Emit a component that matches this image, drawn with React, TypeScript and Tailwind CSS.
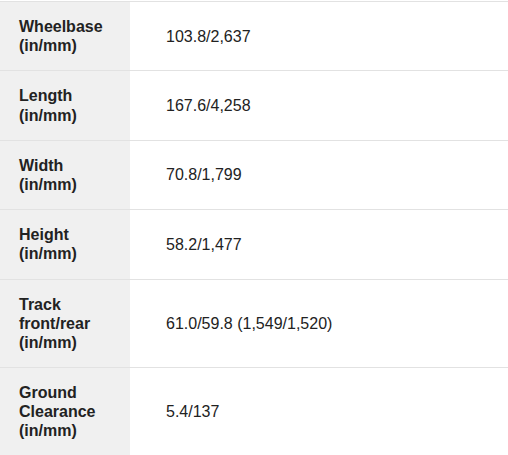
import React from "react";

const rows: [string[], string][] = [
  [["Wheelbase", "(in/mm)"], "103.8/2,637"],
  [["Length", "(in/mm)"], "167.6/4,258"],
  [["Width", "(in/mm)"], "70.8/1,799"],
  [["Height", "(in/mm)"], "58.2/1,477"],
  [["Track", "front/rear", "(in/mm)"], "61.0/59.8 (1,549/1,520)"],
  [["Ground", "Clearance", "(in/mm)"], "5.4/137"],
];

export default function App() {
  return (
    <div
      className="w-[508px] h-[455px] overflow-hidden bg-white pt-px text-[16px] leading-[1.2] text-[#222]"
      style={{ fontFamily: '"Liberation Sans", Arial, sans-serif' }}
    >
      {rows.map(([label, value], i) => (
        <div key={i} className="flex border-t border-[#e2e2e2]">
          <div className="w-[130px] shrink-0 bg-[#f0f0f0] pl-[19px] py-[15px] font-bold">
            {label.map((l, j) => (
              <div key={j}>{l}</div>
            ))}
          </div>
          <div className="flex items-center pl-[36px]">{value}</div>
        </div>
      ))}
    </div>
  );
}
